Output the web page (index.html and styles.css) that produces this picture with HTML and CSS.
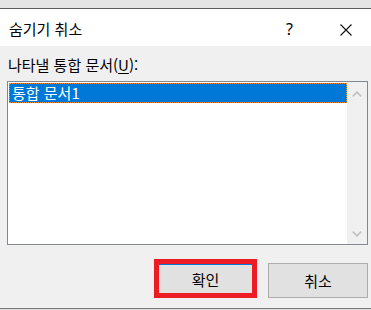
FILE: index.html
```html
<!DOCTYPE html>
<html lang="ko">
<head>
    <meta charset="UTF-8">
    <meta name="viewport" content="width=device-width, initial-scale=1.0">
    <title>숨기기 취소</title>
    <link rel="stylesheet" href="styles.css">
</head>
<body>
    <div class="top-strip"></div>

    <!-- Title bar -->
    <div class="titlebar">
        <span class="title">숨기기 취소</span>
        <span class="help">?</span>
        <svg class="close" width="12" height="12" viewBox="0 0 12 12">
            <path d="M0.5 0.5 L11.5 11.5 M11.5 0.5 L0.5 11.5" stroke="#111" stroke-width="1.1" fill="none"/>
        </svg>
    </div>

    <!-- Dialog body -->
    <div class="content">
        <div class="label">나타낼 통합 문서(<u>U</u>):</div>
        <div class="listbox">
            <div class="list-items">
                <div class="list-item selected">통합 문서1</div>
            </div>
            <div class="scrollbar">
                <svg width="10" height="6" viewBox="0 0 10 6">
                    <path d="M0.8 5.3 L5 1.2 L9.2 5.3" stroke="#c2c2c2" stroke-width="1.8" fill="none"/>
                </svg>
                <svg width="10" height="6" viewBox="0 0 10 6">
                    <path d="M0.8 0.7 L5 4.8 L9.2 0.7" stroke="#c2c2c2" stroke-width="1.8" fill="none"/>
                </svg>
            </div>
        </div>
        <div class="buttons">
            <button class="btn btn-ok">확인</button>
            <button class="btn">취소</button>
        </div>
    </div>

    <div class="bottom-line"></div>
</body>
</html>
```

FILE: styles.css
```css
body {
    margin: 0;
    background-color: #f0f0f0;
    font-family: 'Noto Sans CJK KR', 'Noto Sans', sans-serif;
    font-size: 15px;
    color: #000;
    overflow: hidden;
}
.top-strip {
    height: 8px;
    background-color: #e4e4e4;
    border-bottom: 1px solid #5c5c5c;
}
.titlebar {
    height: 37px;
    background-color: #ffffff;
    display: flex;
    align-items: center;
    padding-left: 9px;
}
.title {
    flex: 1;
    line-height: 20px;
    margin-top: 2px;
}
.help {
    font-family: 'Noto Sans', sans-serif;
    font-size: 16px;
    margin-right: 47px;
    margin-top: 2px;
}
.close {
    margin-right: 19px;
    margin-top: 4px;
}
.content {
    padding: 9px 3px 0 7px;
}
.label {
    line-height: 20px;
    margin-bottom: 6px;
    padding-left: 1px;
}
.label u {
    text-underline-offset: 2px;
}
.listbox {
    display: flex;
    height: 164px;
    box-sizing: border-box;
    border: 1px solid #828790;
    background-color: #ffffff;
}
.list-items {
    flex: 1;
    padding: 1px 0 0 1px;
}
.list-item {
    height: 20px;
    box-sizing: border-box;
    line-height: 18px;
    padding-left: 2px;
}
.selected {
    background-color: #0078d7;
    color: #ffffff;
    border: 1px dotted #f28a2a;
}
.scrollbar {
    width: 20px;
    background-color: #f0f0f0;
    display: flex;
    flex-direction: column;
    justify-content: space-between;
    align-items: center;
    padding: 9px 0 7px;
}
.buttons {
    display: flex;
    justify-content: flex-end;
    align-items: flex-end;
    gap: 11px;
    margin-top: 14px;
    margin-bottom: 10px;
}
.btn {
    width: 100px;
    height: 35px;
    border: 1px solid #adadad;
    background-color: #e1e1e1;
    font-family: 'Noto Sans CJK KR', sans-serif;
    font-size: 15px;
    color: #000;
    padding: 0;
}
.btn-ok {
    width: 103px;
    height: 39px;
    border: 5px solid #ed1c24;
    box-shadow: inset 0 1px 0 #0078d7;
    padding-top: 1px;
}
.bottom-line {
    border-top: 1px solid #7a7a7a;
    height: 10px;
    background-color: #dcdcdc;
}
```
